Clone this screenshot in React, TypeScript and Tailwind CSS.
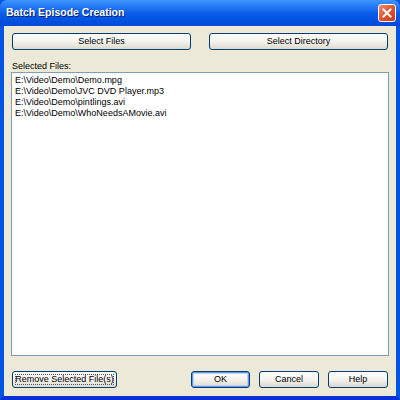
const files = [
  "E:\\Video\\Demo\\Demo.mpg",
  "E:\\Video\\Demo\\JVC DVD Player.mp3",
  "E:\\Video\\Demo\\pintlings.avi",
  "E:\\Video\\Demo\\WhoNeedsAMovie.avi",
];

const XpButton = ({
  label,
  className = "",
  isDefault = false,
  focused = false,
}: {
  label: string;
  className?: string;
  isDefault?: boolean;
  focused?: boolean;
}) => (
  <button
    className={`relative h-[17px] whitespace-nowrap rounded-[3px] border border-[#003c74] bg-gradient-to-b from-[#ffffff] via-[#f4f3ee] to-[#dcd9cd] text-[9px] leading-none text-black ${
      isDefault ? "shadow-[inset_0_0_0_1px_#6a94e6,inset_0_0_0_2px_#bcd4f6]" : ""
    } ${className}`}
  >
    {focused && (
      <span className="absolute inset-[2px] border border-dotted border-[#555]" />
    )}
    <span className="relative">{label}</span>
  </button>
);

export default function App() {
  return (
    <div
      className="flex h-[400px] w-[400px] flex-col bg-[#0054e3]"
      style={{ fontFamily: '"Liberation Sans", Arial, sans-serif' }}
    >
      {/* title bar */}
      <div className="flex h-[26px] items-center justify-between rounded-t-[7px] bg-gradient-to-b from-[#3d95ff] via-[#0a5eea] to-[#0048d8] pl-[6px] pr-[4px]">
        <span className="text-[10.5px] font-bold text-white [text-shadow:1px_1px_0_#0a1e6e]">
          Batch Episode Creation
        </span>
        <div className="flex h-[18px] w-[18px] items-center justify-center rounded-[3px] border border-white bg-gradient-to-br from-[#f08c6c] via-[#e2532e] to-[#c7391a]">
          <svg width="10" height="10" viewBox="0 0 10 10">
            <path
              d="M1.5 1.5 L8.5 8.5 M8.5 1.5 L1.5 8.5"
              stroke="white"
              strokeWidth="2"
              strokeLinecap="square"
            />
          </svg>
        </div>
      </div>

      {/* body */}
      <div className="flex flex-1 flex-col border-x-4 border-b-4 border-x-[#0054e3] border-b-[#0831d9] bg-[#ece9d8] px-[8px] pb-[8px] pt-[7px]">
        <div className="grid grid-cols-2 gap-[18px]">
          <XpButton label="Select Files" />
          <XpButton label="Select Directory" />
        </div>

        <div className="pt-[11px] pb-[1px] text-[9px] leading-[10px] text-black">
          Selected Files:
        </div>

        <div className="-mx-px h-[284px] border border-[#7f9db9] bg-white px-[3px] py-[2px] text-[9px] leading-[11px] text-black">
          {files.map((f) => (
            <div key={f}>{f}</div>
          ))}
        </div>

        <div className="mt-[15px] flex">
          <XpButton label="Remove Selected File(s)" className="w-[105px]" focused />
          <div className="ml-auto flex gap-[9px]">
            <XpButton label="OK" className="w-[59px]" isDefault />
            <XpButton label="Cancel" className="w-[60px]" />
            <XpButton label="Help" className="w-[60px]" />
          </div>
        </div>
      </div>
    </div>
  );
}
